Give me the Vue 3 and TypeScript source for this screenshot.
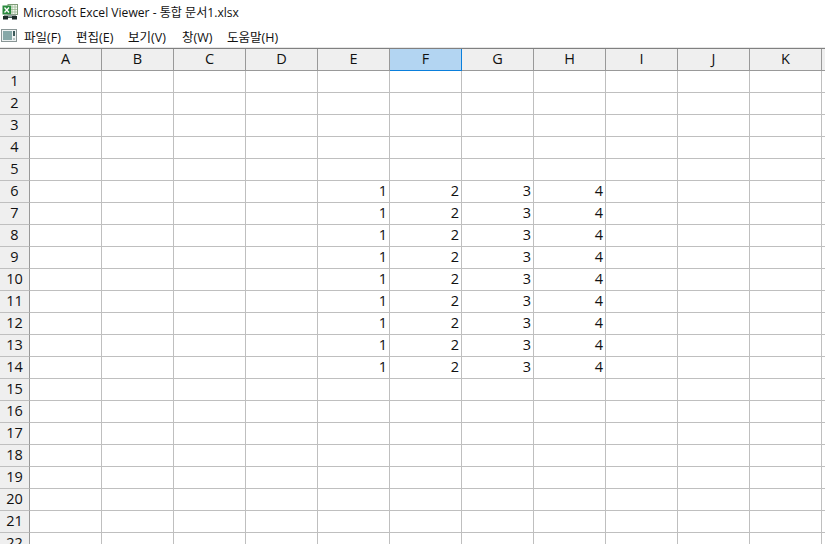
<script setup lang="ts">
const letters = ['A', 'B', 'C', 'D', 'E', 'F', 'G', 'H', 'I', 'J', 'K', 'L']
const menus = [
  { label: '파일(F)', width: 52 },
  { label: '편집(E)', width: 52 },
  { label: '보기(V)', width: 54 },
  { label: '창(W)', width: 45 },
  { label: '도움말(H)', width: 60 },
]
const dataCols = [4, 5, 6, 7]
function cellValue(row: number, col: number): string {
  if (row >= 6 && row <= 14 && dataCols.includes(col)) return String(col - 3)
  return ''
}
const rows = Array.from({ length: 22 }, (_, i) => i + 1)
</script>

<template>
  <div class="window">
    <div class="titlebar">
      <svg class="app-icon" width="16" height="16" viewBox="0 0 16 16">
        <rect x="6" y="0.5" width="9.5" height="10" fill="#f4f8f2" stroke="#7f9c78" />
        <path d="M7 3h8M7 5.5h8M7 8h8M10 1v9M13 1v9" stroke="#8fb287" stroke-width="0.7" fill="none" />
        <rect x="0.5" y="1.5" width="8.5" height="9" fill="#2a8a3e" />
        <path d="M2.5 3.5 7 8.5M7 3.5 2.5 8.5" stroke="#fff" stroke-width="1.3" />
        <rect x="2" y="10.5" width="12" height="2" fill="#9aa7a2" />
        <rect x="1" y="12" width="5" height="3.5" fill="#1c2b28" />
        <rect x="10" y="12" width="5" height="3.5" fill="#1c2b28" />
        <rect x="6" y="12.5" width="4" height="1.5" fill="#44605a" />
      </svg>
      <span class="title">Microsoft Excel Viewer - 통합 문서1.xlsx</span>
    </div>
    <div class="menubar">
      <svg class="doc-icon" width="16" height="13" viewBox="0 0 16 13">
        <rect x="0.5" y="0.5" width="15" height="12" fill="#eef2f2" stroke="#8a9696" />
        <rect x="2" y="2" width="9" height="9" fill="#86a8a8" />
        <rect x="12" y="2" width="2" height="5" fill="#3c5a5a" />
        <rect x="12" y="9" width="2" height="2" fill="#b8c4c4" />
      </svg>
      <span v-for="m in menus" :key="m.label" class="menu-item" :style="{ width: m.width + 'px' }">{{ m.label }}</span>
    </div>
    <div class="sheet">
      <div class="corner"></div>
      <div
        v-for="(l, i) in letters"
        :key="l"
        class="col-head"
        :class="{ selected: i === 5 }"
      >{{ l }}</div>
      <template v-for="r in rows" :key="r">
        <div class="row-head">{{ r }}</div>
        <div v-for="(l, c) in letters" :key="l" class="cell">{{ cellValue(r, c) }}</div>
      </template>
    </div>
  </div>
</template>

<style>
html, body { margin: 0; background: #fff; overflow: hidden; }
</style>

<style scoped>
.window {
  width: 825px;
  height: 544px;
  overflow: hidden;
  background: #fff;
  font-family: "Open Sans", "Noto Sans CJK KR", sans-serif;
  color: #111;
}
.titlebar {
  height: 23px;
  display: flex;
  align-items: center;
  padding-left: 2px;
  gap: 5px;
  font-size: 12.1px;
}
.menubar {
  height: 25px;
  display: flex;
  align-items: center;
  font-size: 12.5px;
  padding: 2px 0 0 1px;
  box-sizing: border-box;
  border-bottom: 1px solid #e6e6e6;
}
.doc-icon { margin-right: 7px; margin-top: -2px; }
.menu-item { display: block; white-space: nowrap; }
.sheet {
  display: grid;
  grid-template-columns: 30px repeat(12, 72px);
  grid-auto-rows: 22px;
  width: 894px;
  font-size: 14.5px;
  border-top: 1px solid #808080;
}
.corner, .col-head, .row-head, .cell {
  box-sizing: border-box;
  border-right: 1px solid #bfbfbf;
  border-bottom: 1px solid #bfbfbf;
  line-height: 20px;
}
.corner, .col-head {
  background: #efefef;
  border-right-color: #999;
  border-bottom-color: #999;
}
.col-head { text-align: center; }
.col-head.selected {
  background: #b3d5f2;
  border-right-color: #0a7fdc;
  border-bottom-color: #0a7fdc;
}
.row-head {
  background: #efefef;
  text-align: center;
  border-right-color: #999;
}
.cell {
  text-align: right;
  padding-right: 2px;
  background: #fff;
}
</style>
